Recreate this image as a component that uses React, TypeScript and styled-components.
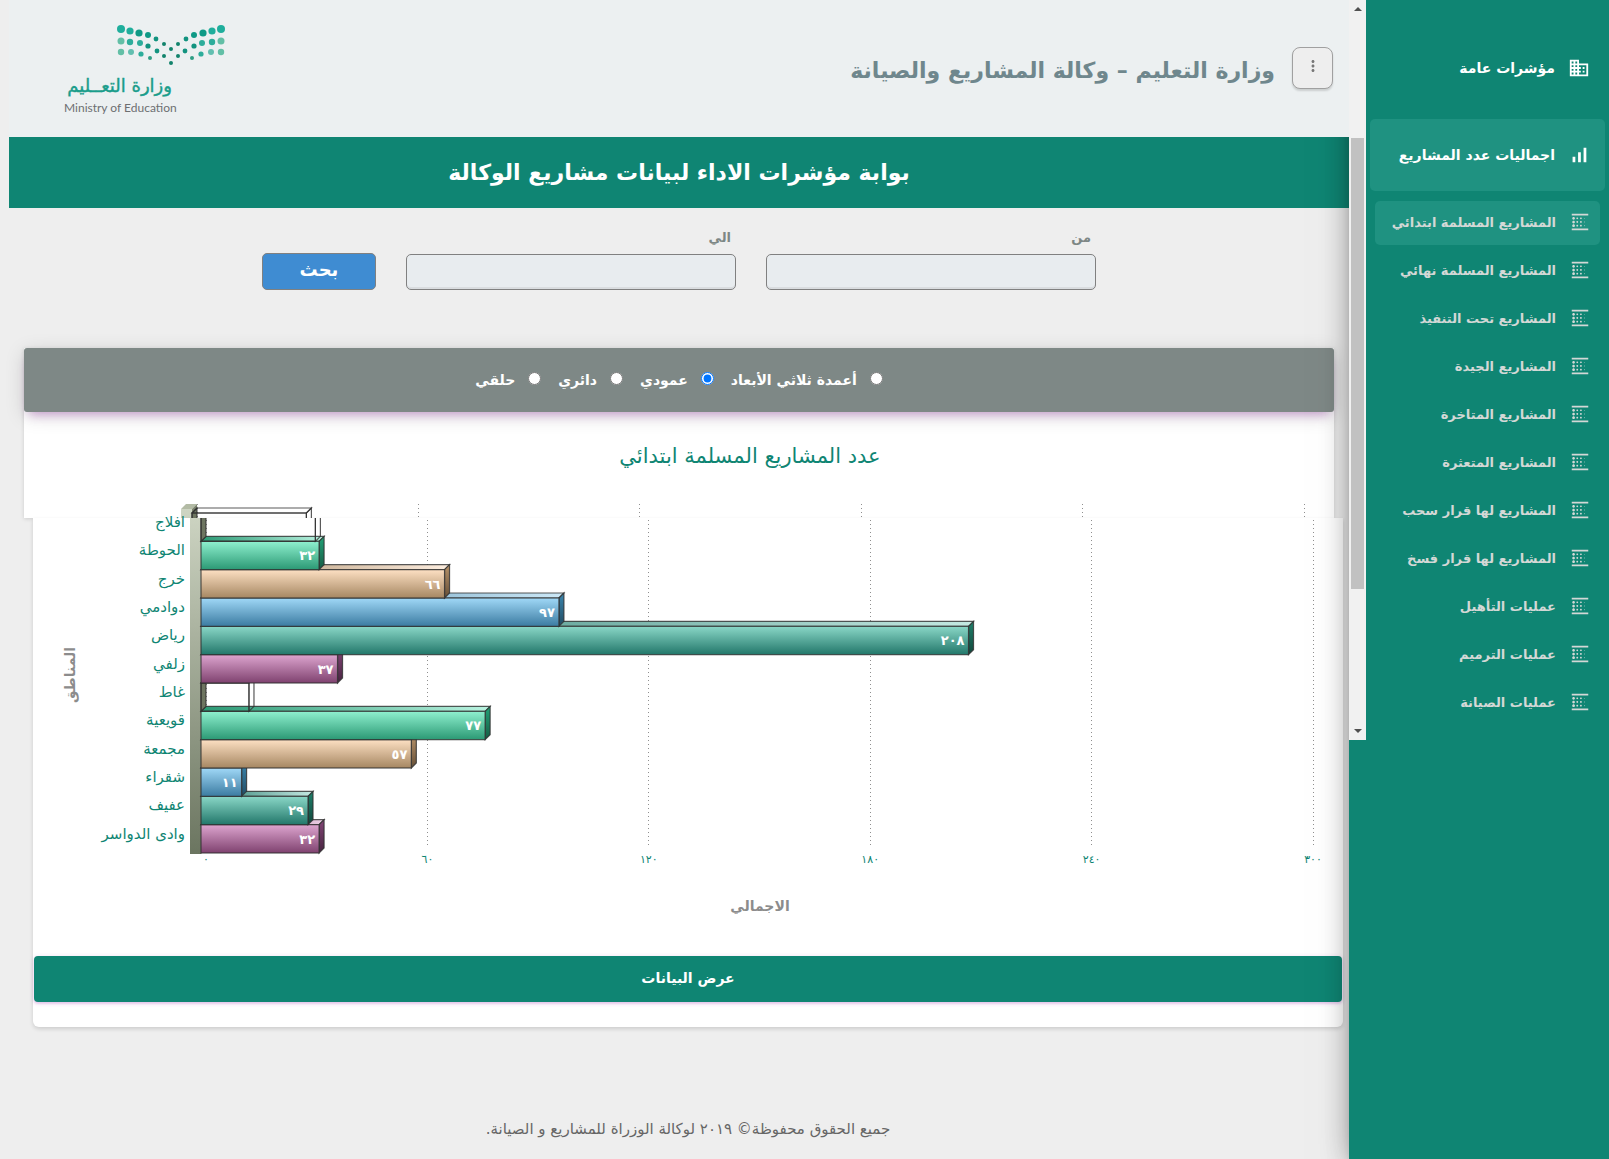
import React from "react";
import styled, { createGlobalStyle } from "styled-components";
import { MdBlurLinear, MdBusiness, MdMoreVert, MdSignalCellularAlt } from "react-icons/md";

const green = "#0f8573";
const fontStack = '"DejaVu Sans", "Noto Sans", sans-serif';

const GlobalStyle = createGlobalStyle`
  *, *::before, *::after { box-sizing: border-box; }
  body { margin: 0; background: #eeeeee; font-family: ${fontStack}; }
  button, input { font-family: inherit; }
`;

const Page = styled.div`
  display: grid;
  grid-template-columns: 260px minmax(0, 1fr);
  min-height: 100vh;
  direction: rtl;
`;

const Sidebar = styled.aside`
  position: relative;
  z-index: 2;
  background: ${green};
  box-shadow: 0 16px 38px -12px rgba(0, 0, 0, 0.56), 0 4px 25px rgba(0, 0, 0, 0.12),
    0 8px 10px -5px rgba(0, 0, 0, 0.2);
`;

const ScrollArea = styled.div`
  display: flex;
  height: 740px;
`;

const Nav = styled.nav`
  display: flex;
  flex: 1;
  flex-direction: column;
  min-width: 0;
  padding: 32px 4px 0;
`;

const NavLink = styled.a<{ $active?: boolean }>`
  display: flex;
  align-items: center;
  gap: 13px;
  height: 72px;
  margin-bottom: 15px;
  padding: 0 15px 1px;
  border-radius: 5px;
  background: ${(p) => (p.$active ? "#1f9281" : "transparent")};
  color: #ffffff;
  font-size: 14px;
  font-weight: 700;
  text-decoration: none;
  white-space: nowrap;

  svg {
    flex: none;
  }
`;

const SubList = styled.ul`
  display: flex;
  flex-direction: column;
  gap: 4px;
  margin: 0;
  margin-top: -5px;
  padding: 0 5px;
  list-style: none;
`;

const SubLink = styled(NavLink)`
  height: 44px;
  margin: 0;
  padding: 0 9px 2px;
  color: #d3d8d6;
  font-size: 13px;
`;

const ScrollTrack = styled.div`
  display: flex;
  flex-direction: column;
  align-items: center;
  justify-content: space-between;
  width: 17px;
  padding: 7px 0;
  background: #f1f1f1;
`;

const ScrollThumb = styled.div`
  width: 13px;
  height: 451px;
  margin-bottom: 13px;
  background: #c1c1c1;
`;

const Arrow = styled.div<{ $down?: boolean }>`
  border: 4px solid transparent;
  border-top: ${(p) => (p.$down ? "4px solid #505050" : "0")};
  border-bottom: ${(p) => (p.$down ? "0" : "4px solid #505050")};
`;

const Main = styled.main`
  display: flex;
  flex-direction: column;
  min-width: 0;
  padding-left: 9px;
`;

const Header = styled.header`
  position: relative;
  z-index: 3;
  display: flex;
  align-items: center;
  gap: 17px;
  height: 137px;
  padding: 0 16px 2px 55px;
  background: #ecf0f1;
`;

const MenuButton = styled.button`
  display: grid;
  place-items: center;
  width: 41px;
  height: 42px;
  padding: 0 0 4px;
  border: 1px solid #a0a0a0;
  border-radius: 8px;
  background: #eeeeee;
  box-shadow: 0 2px 2px rgba(0, 0, 0, 0.14);
  color: #777777;
`;

const SiteTitle = styled.h1`
  flex: 1;
  margin: 0;
  padding-top: 6px;
  color: #6f878d;
  font-size: 22px;
  font-weight: 700;
  line-height: 32px;
  white-space: nowrap;
`;

const Banner = styled.h2`
  margin: 0;
  padding: 16px;
  background: ${green};
  color: #ffffff;
  font-size: 22px;
  font-weight: 700;
  line-height: 39px;
  text-align: center;
`;

const Filters = styled.form`
  display: flex;
  align-items: flex-end;
  justify-content: center;
  gap: 30px;
  padding: 19px 15px 58px;
`;

const Field = styled.label`
  display: flex;
  flex: 0 1 330px;
  flex-direction: column;
  gap: 6px;
  padding-top: 1px;
  color: #7d8785;
  font-size: 13px;
  font-weight: 700;
  line-height: 20px;

  span {
    padding: 0 5px;
  }
`;

const DateInput = styled.input`
  width: 100%;
  height: 36px;
  padding: 0 8px;
  border: 1px solid #808080;
  border-radius: 5px;
  background: #e8ecef;
  box-shadow: inset 0 -2px 0 #d9dcdf;
`;

const SearchButton = styled.button`
  width: 114px;
  height: 37px;
  padding: 0 0 4px;
  border: 1px solid #808080;
  border-radius: 5px;
  background: #3f8cd2;
  color: #ffffff;
  font-size: 18px;
  font-weight: 700;
`;

const CardTop = styled.section`
  margin: 0 15px;
  background: #ffffff;
  box-shadow: 0 1px 4px rgba(0, 0, 0, 0.14);
`;

const ChartTypes = styled.div`
  display: flex;
  align-items: center;
  justify-content: center;
  gap: 17px;
  height: 64px;
  border-radius: 3px;
  background: #7e8886;
  box-shadow: 0 4px 20px rgba(0, 0, 0, 0.14), 0 7px 10px -5px rgba(156, 39, 176, 0.4);
`;

const TypeOption = styled.label`
  display: flex;
  align-items: center;
  gap: 13px;
  color: #ffffff;
  font-size: 14px;
  font-weight: 700;

  input {
    width: 13px;
    height: 13px;
    margin: 0 0 4px;
  }
`;

const CardBottom = styled.section`
  position: relative;
  margin: 0 6px 0 24px;
  padding: 0 1px 25px;
  border-radius: 0 0 6px 6px;
  background: #ffffff;
  box-shadow: 0 2px 4px rgba(0, 0, 0, 0.14);
`;

const ChartBox = styled.div<{ $bleed?: boolean }>`
  margin: 0 ${(p) => (p.$bleed ? "-1px" : "0")};
  direction: ltr;

  svg {
    display: block;
    width: 100%;
    height: auto;
    overflow: visible;
  }
`;

const ShowDataButton = styled.button`
  display: block;
  width: 100%;
  height: 46px;
  padding: 0 0 3px;
  border: 0;
  border-radius: 4px;
  background: ${green};
  box-shadow: 0 2px 2px rgba(156, 39, 176, 0.14), 0 1px 5px rgba(156, 39, 176, 0.2);
  color: #ffffff;
  font-size: 14px;
  font-weight: 700;
`;

const Footer = styled.footer`
  padding: 90px 15px 16px 33px;
  color: #666666;
  font-size: 15px;
  line-height: 24px;
  text-align: center;
`;

const subItems = [
  "المشاريع المسلمة ابتدائي",
  "المشاريع المسلمة نهائي",
  "المشاريع تحت التنفيذ",
  "المشاريع الجيدة",
  "المشاريع المتاخرة",
  "المشاريع المتعثرة",
  "المشاريع لها قرار سحب",
  "المشاريع لها قرار فسخ",
  "عمليات التأهيل",
  "عمليات الترميم",
  "عمليات الصيانة",
];

const chartTypes = ["أعمدة ثلاثي الأبعاد", "عمودي", "دائري", "حلقي"];

type Shade = { light: string; dark: string; side: string; sideDark: string; top: string };

const shades: Record<string, Shade> = {
  mint: { light: "#8ff0cf", dark: "#2b9974", side: "#22a277", sideDark: "#165b44", top: "#b9f3e0" },
  sand: { light: "#fde0c3", dark: "#a68762", side: "#b8946b", sideDark: "#664f37", top: "#fdeee0" },
  blue: { light: "#a0d8f7", dark: "#3b7ba1", side: "#3b86ae", sideDark: "#214b62", top: "#cde9f7" },
  teal: { light: "#8ad7c7", dark: "#22776a", side: "#1f806b", sideDark: "#12463b", top: "#c4e9e2" },
  plum: { light: "#dda5cf", dark: "#7f426f", side: "#824576", sideDark: "#472440", top: "#eccfe4" },
};

const rows: { name: string; value: number; shade?: string }[] = [
  { name: "افلاج", value: 31 },
  { name: "الحوطة", value: 32, shade: "mint" },
  { name: "خرج", value: 66, shade: "sand" },
  { name: "دوادمي", value: 97, shade: "blue" },
  { name: "رياض", value: 208, shade: "teal" },
  { name: "زلفي", value: 37, shade: "plum" },
  { name: "غاط", value: 13 },
  { name: "قويعية", value: 77, shade: "mint" },
  { name: "مجمعة", value: 57, shade: "sand" },
  { name: "شقراء", value: 11, shade: "blue" },
  { name: "عفيف", value: 29, shade: "teal" },
  { name: "وادى الدواسر", value: 32, shade: "plum" },
];

const arabic = (n: number) => String(n).replace(/\d/g, (d) => "٠١٢٣٤٥٦٧٨٩"[Number(d)]);

const BAR_X = 168;
const FIRST_ROW = 101;
const ROW_H = 340 / 12;
const UNIT = 3.69;
const DEPTH = 5;

function Bar({ index, id }: { index: number; id: string }) {
  const { value, shade } = rows[index];
  const y = FIRST_ROW + index * ROW_H;
  const right = BAR_X + value * UNIT;
  const bottom = y + ROW_H;
  const line = { stroke: "#2f2f2f", strokeOpacity: 0.8, strokeWidth: 1.2 };
  const fill = (face: string) => (shade ? `url(#${id}-${shade}-${face})` : "none");
  return (
    <g {...line}>
      {!shade && (
        <polygon
          points={`${BAR_X},${y} ${BAR_X + DEPTH},${y - DEPTH} ${BAR_X + DEPTH},${bottom - DEPTH} ${BAR_X},${bottom}`}
          fill="#6d7560"
        />
      )}
      <polygon
        points={`${BAR_X},${y} ${BAR_X + DEPTH},${y - DEPTH} ${right + DEPTH},${y - DEPTH} ${right},${y}`}
        fill={fill("top")}
      />
      <polygon
        points={`${right},${y} ${right + DEPTH},${y - DEPTH} ${right + DEPTH},${bottom - DEPTH} ${right},${bottom}`}
        fill={fill("side")}
      />
      <rect x={BAR_X} y={y} width={right - BAR_X} height={ROW_H} fill={fill("front")} />
    </g>
  );
}

/* The drawing is cut at y = 106: the head slice sits in the upper card, the rest in the lower one. */
function Chart({ part }: { part: "head" | "body" }) {
  const head = part === "head";
  const visible = head ? [0] : rows.map((_, i) => i).reverse();
  return (
    <svg
      viewBox={head ? "0 0 1310 106" : "0 106 1310 438"}
      fontFamily={fontStack}
      role="img"
      aria-label="عدد المشاريع المسلمة ابتدائي"
    >
      <defs>
        <clipPath id={`${part}-clip`}>
          <rect x="0" y={head ? 0 : 106} width="1310" height={head ? 106 : 438} />
        </clipPath>
        <linearGradient id={`${part}-wall`} x1="0" y1="0" x2="0" y2="1">
          <stop offset="0" stopColor="#ced5c3" />
          <stop offset="1" stopColor="#6b7560" />
        </linearGradient>
        {Object.entries(shades).map(([name, s]) => (
          <React.Fragment key={name}>
            <linearGradient id={`${part}-${name}-front`} x1="0" y1="0" x2="0" y2="1">
              <stop offset="0" stopColor={s.light} />
              <stop offset="1" stopColor={s.dark} />
            </linearGradient>
            <linearGradient id={`${part}-${name}-side`} x1="0" y1="0" x2="0" y2="1">
              <stop offset="0" stopColor={s.side} />
              <stop offset="1" stopColor={s.sideDark} />
            </linearGradient>
            <linearGradient id={`${part}-${name}-top`} x1="0" y1="0" x2="1" y2="0">
              <stop offset="0" stopColor={s.dark} />
              <stop offset="1" stopColor={s.top} />
            </linearGradient>
          </React.Fragment>
        ))}
      </defs>

      <g clipPath={`url(#${part}-clip)`}>
        {[0, 1, 2, 3, 4, 5].map((i) => (
          <line
            key={i}
            x1={Math.floor(173 + i * 221.4) + 0.5}
            x2={Math.floor(173 + i * 221.4) + 0.5}
            y1={92}
            y2={433}
            stroke="#8f8f8f"
            strokeDasharray="1 3"
          />
        ))}

        <polygon points="157,97 162,92 173,92 168,97" fill="#b3bba5" />
        <polygon points="168,97 173,92 173,437 168,442" fill="#7a826d" />
        <rect x="157" y="97" width="11" height="345" fill={`url(#${part}-wall)`} />

        {visible.map((i) => (
          <Bar key={i} index={i} id={part} />
        ))}
      </g>

      {head ? (
        <text x="726" y="51" fontSize="21" fill={green} textAnchor="middle">
          عدد المشاريع المسلمة ابتدائي
        </text>
      ) : (
        <>
          {rows.map((r, i) => (
            <text
              key={r.name}
              x="152"
              y={FIRST_ROW + i * ROW_H + 14}
              fontSize="15"
              fill={green}
              textAnchor="end"
            >
              {r.name}
            </text>
          ))}
          {rows.map(
            (r, i) =>
              r.shade && (
                <text
                  key={r.name}
                  x={BAR_X + r.value * UNIT - 4}
                  y={FIRST_ROW + i * ROW_H + 19}
                  fontSize="13"
                  fontWeight="700"
                  fill="#ffffff"
                  textAnchor="end"
                >
                  {arabic(r.value)}
                </text>
              )
          )}
          {[0, 60, 120, 180, 240, 300].map((n, i) => (
            <text key={n} x={173 + i * 221.4} y="451" fontSize="11" fill={green} textAnchor="middle">
              {arabic(n)}
            </text>
          ))}
          <text x="727" y="499" fontSize="14" fontWeight="700" fill="#8c8c8c" textAnchor="middle">
            الاجمالي
          </text>
          <text
            transform="translate(42 263) rotate(-90)"
            fontSize="14"
            fontWeight="700"
            fill="#8c8c8c"
            textAnchor="middle"
          >
            المناطق
          </text>
        </>
      )}
    </svg>
  );
}

/* Left half of the dot pattern, mirrored about x = 107. */
const logoDots: [number, number, number, string][] = [
  [57, 6, 4, "#1fae9c"],
  [66, 8, 3.6, "#1fae9c"],
  [75, 10, 3.6, "#0f9a86"],
  [84, 12, 3, "#0f9a86"],
  [92, 16, 2.4, "#12937f"],
  [100, 21, 2, "#12836c"],
  [57, 18, 3.5, "#62bfa6"],
  [66, 19, 3.2, "#2dad9b"],
  [76, 20, 3, "#2dad9b"],
  [84, 23, 2.6, "#12937f"],
  [93, 28, 2.4, "#12937f"],
  [100, 33, 2, "#12836c"],
  [57, 29, 3.2, "#62bfa6"],
  [67, 29, 3, "#62bfb0"],
  [77, 31, 2.6, "#2dad9b"],
  [86, 35, 2, "#2f9e85"],
];

function Logo() {
  return (
    <svg width="162" height="90" viewBox="0 0 162 90" role="img" aria-label="وزارة التعليم" overflow="visible">
      {logoDots.map(([x, y, r, c]) => (
        <g key={`${x}-${y}`} fill={c}>
          <circle cx={x} cy={y} r={r} />
          <circle cx={214 - x} cy={y} r={r} />
        </g>
      ))}
      <circle cx="107" cy="26" r="2" fill="#12836c" />
      <circle cx="107" cy="40" r="2" fill="#12836c" />
      <text
        x="108"
        y="69"
        fontFamily={fontStack}
        fontSize="18"
        fill="#1a9d8b"
        stroke="#1a9d8b"
        strokeWidth="0.4"
        textAnchor="end"
        direction="ltr"
      >
        وزارة التعــليم
      </text>
      <text x="0" y="89" fontFamily="Lato, sans-serif" fontSize="12" fill="#6d6f71" direction="ltr">
        Ministry of Education
      </text>
    </svg>
  );
}

export default function App() {
  const [active, setActive] = React.useState(0);
  const [type, setType] = React.useState(1);
  return (
    <>
      <GlobalStyle />
      <Page>
        <Sidebar>
          <ScrollArea>
            <Nav>
              <NavLink href="#general">
                <MdBusiness size={22} />
                مؤشرات عامة
              </NavLink>
              <NavLink href="#totals" $active>
                <MdSignalCellularAlt size={22} />
                اجماليات عدد المشاريع
              </NavLink>
              <SubList>
                {subItems.map((item, i) => (
                  <li key={item}>
                    <SubLink href={`#item-${i}`} $active={i === active} onClick={() => setActive(i)}>
                      <MdBlurLinear size={22} />
                      {item}
                    </SubLink>
                  </li>
                ))}
              </SubList>
            </Nav>
            <ScrollTrack aria-hidden="true">
              <Arrow />
              <ScrollThumb />
              <Arrow $down />
            </ScrollTrack>
          </ScrollArea>
        </Sidebar>

        <Main>
          <Header>
            <MenuButton type="button" aria-label="القائمة">
              <MdMoreVert size={18} />
            </MenuButton>
            <SiteTitle>وزارة التعليم – وكالة المشاريع والصيانة</SiteTitle>
            <Logo />
          </Header>
          <Banner>بوابة مؤشرات الاداء لبيانات مشاريع الوكالة</Banner>

          <Filters onSubmit={(e) => e.preventDefault()}>
            <Field>
              <span>من</span>
              <DateInput type="text" name="from" />
            </Field>
            <Field>
              <span>الي</span>
              <DateInput type="text" name="to" />
            </Field>
            <SearchButton type="submit">بحث</SearchButton>
          </Filters>

          <CardTop>
            <ChartTypes>
              {chartTypes.map((name, i) => (
                <TypeOption key={name}>
                  <input type="radio" name="chart" checked={i === type} onChange={() => setType(i)} />
                  {name}
                </TypeOption>
              ))}
            </ChartTypes>
            <ChartBox>
              <Chart part="head" />
            </ChartBox>
          </CardTop>
          <CardBottom>
            <ChartBox $bleed>
              <Chart part="body" />
            </ChartBox>
            <ShowDataButton type="button">عرض البيانات</ShowDataButton>
          </CardBottom>

          <Footer>جميع الحقوق محفوظة© ٢٠١٩ لوكالة الوزراة للمشاريع و الصيانة.</Footer>
        </Main>
      </Page>
    </>
  );
}
